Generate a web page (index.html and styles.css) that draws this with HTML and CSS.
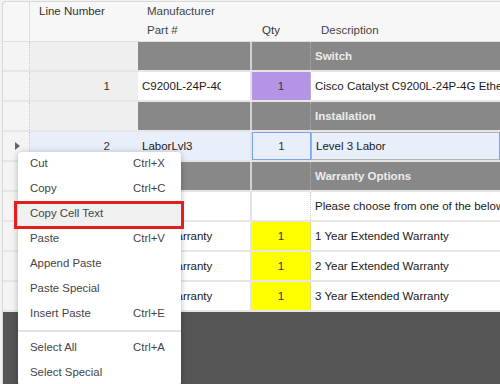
FILE: index.html
```html
<!DOCTYPE html>
<html lang="en">
<head>
    <meta charset="UTF-8">
    <title>Quote Lines</title>
    <link rel="stylesheet" href="styles.css">
</head>
<body>
    <div class="grid">
        <div class="row head">
            <div class="cell c0"></div>
            <div class="cell c1"><div>Line Number</div></div>
            <div class="cell c2"><div>Manufacturer</div><div>Part #</div></div>
            <div class="cell c3"><div>&nbsp;</div><div>Qty</div></div>
            <div class="cell c4"><div>&nbsp;</div><div>Description</div></div>
        </div>

        <div class="row group">
            <div class="cell c0"></div>
            <div class="cell c1"></div>
            <div class="cell c2"></div>
            <div class="cell c3"></div>
            <div class="cell c4">Switch</div>
        </div>

        <div class="row">
            <div class="cell c0"></div>
            <div class="cell c1">1</div>
            <div class="cell c2"><span class="clip">C9200L-24P-4G</span></div>
            <div class="cell c3 purple">1</div>
            <div class="cell c4">Cisco Catalyst C9200L-24P-4G Ethernet Switch</div>
        </div>

        <div class="row group">
            <div class="cell c0"></div>
            <div class="cell c1"></div>
            <div class="cell c2"></div>
            <div class="cell c3"></div>
            <div class="cell c4">Installation</div>
        </div>

        <div class="row selected">
            <div class="cell c0"><span class="arrow"></span></div>
            <div class="cell c1">2</div>
            <div class="cell c2">LaborLvl3</div>
            <div class="cell c3 active">1</div>
            <div class="cell c4 editing">Level 3 Labor</div>
        </div>

        <div class="row group">
            <div class="cell c0"></div>
            <div class="cell c1"></div>
            <div class="cell c2"></div>
            <div class="cell c3"></div>
            <div class="cell c4">Warranty Options</div>
        </div>

        <div class="row">
            <div class="cell c0"></div>
            <div class="cell c1">3</div>
            <div class="cell c2"></div>
            <div class="cell c3"></div>
            <div class="cell c4">Please choose from one of the below options</div>
        </div>

        <div class="row">
            <div class="cell c0"></div>
            <div class="cell c1">4</div>
            <div class="cell c2">1 Yr Warranty</div>
            <div class="cell c3 yellow">1</div>
            <div class="cell c4">1 Year Extended Warranty</div>
        </div>

        <div class="row">
            <div class="cell c0"></div>
            <div class="cell c1">5</div>
            <div class="cell c2">2 Yr Warranty</div>
            <div class="cell c3 yellow">1</div>
            <div class="cell c4">2 Year Extended Warranty</div>
        </div>

        <div class="row">
            <div class="cell c0"></div>
            <div class="cell c1">6</div>
            <div class="cell c2">3 Yr Warranty</div>
            <div class="cell c3 yellow">1</div>
            <div class="cell c4">3 Year Extended Warranty</div>
        </div>
    </div>

    <!-- right-click menu -->
    <div class="menu">
        <div class="item"><span>Cut</span><span>Ctrl+X</span></div>
        <div class="item"><span>Copy</span><span>Ctrl+C</span></div>
        <div class="item hover"><span>Copy Cell Text</span><span></span></div>
        <div class="item"><span>Paste</span><span>Ctrl+V</span></div>
        <div class="item"><span>Append Paste</span><span></span></div>
        <div class="item"><span>Paste Special</span><span></span></div>
        <div class="item"><span>Insert Paste</span><span>Ctrl+E</span></div>
        <div class="sep"></div>
        <div class="item"><span>Select All</span><span>Ctrl+A</span></div>
        <div class="item"><span>Select Special</span><span></span></div>
    </div>

    <div class="callout"></div>
</body>
</html>
```

FILE: styles.css
```css
* {
    box-sizing: border-box;
}

body {
    margin: 0;
    height: 384px;
    overflow: hidden;
    background: #f2f2f2;
    font-family: "Liberation Sans", Arial, sans-serif;
    font-size: 11.5px;
    color: #1a1a1a;
}

.grid {
    margin: 1px 0 0 2px;
    height: 383px;
    border: 1px solid #d9d9d9;
    border-right: none;
    border-bottom: none;
    border-radius: 4px 0 0 0;
    background: #555555;
    overflow: hidden;
}

.row {
    display: grid;
    grid-template-columns: 27px 108px 114px 59px 1fr;
    height: 30px;
    border-bottom: 2px solid #e6e6e6;
    background: #fff;
}

.cell {
    display: flex;
    align-items: center;
    white-space: nowrap;
    overflow: hidden;
    padding-left: 4px;
}

.c0 {
    background: #f4f4f4;
    border-right: 1px dotted #c8c8c8;
    padding-left: 0;
}

.c1 {
    background: #efefef;
    justify-content: flex-end;
    padding-right: 28px;
    color: #333;
}

.c2 {
    border-right: 2px solid #e4e4e4;
}

.c3 {
    justify-content: center;
    padding-left: 0;
    border-right: 1px dotted #c8c8c8;
    color: #333;
}

.clip {
    display: block;
    flex: none;
    width: 79px;
    overflow: hidden;
}

/* header */
.row.head {
    height: 40px;
    background: #f7f7f7;
    border-bottom: 1px solid #dedede;
    color: #444;
}

.head .cell {
    display: block;
    background: #f7f7f7;
    padding: 0 0 0 9px;
    line-height: 19px;
    border-right: none;
    justify-content: flex-start;
}

.head .c0 {
    border-right: 1px solid #dedede;
    padding: 0;
}

.head .c3,
.head .c4 {
    padding-left: 10px;
}

/* group rows */
.group .c2,
.group .c3,
.group .c4 {
    background: #888888;
}

.group .c2 {
    border-right-color: #d2d2d2;
}

.group .c3 {
    border-right-color: #b0b0b0;
}

.group .c4 {
    color: #ececec;
    font-weight: bold;
}

.purple {
    background: #b394e6;
}

.yellow {
    background: #ffff00;
}

/* selected row */
.selected .c1,
.selected .c2,
.selected .c3,
.selected .c4 {
    background: #e8eefa;
}

.selected .c3.active {
    border: 1px solid #7aa3e8;
}

.selected .c4.editing {
    border: 1px solid #b4b4b4;
    border-right-color: #7aa3e8;
}

.arrow {
    display: block;
    margin-left: 12px;
    width: 0;
    height: 0;
    border-left: 5px solid #666;
    border-top: 4px solid transparent;
    border-bottom: 4px solid transparent;
}

/* context menu */
.menu {
    position: absolute;
    left: 18px;
    top: 152px;
    width: 163px;
    background: #fff;
    border-radius: 4px;
    box-shadow: 0 1px 6px rgba(0, 0, 0, 0.28);
    font-size: 11.4px;
    color: #444;
}

.item {
    display: grid;
    grid-template-columns: 103px 1fr;
    height: 25px;
    line-height: 22px;
    padding: 0 12px 3px 12px;
}

.item.hover {
    background: #f0f0f0;
}

.sep {
    height: 2px;
    margin: 3px 0 4px 0;
    background: #e2e2e2;
}

.callout {
    position: absolute;
    left: 14px;
    top: 201px;
    width: 170px;
    height: 28px;
    border: 3px solid #e0201f;
}
```
